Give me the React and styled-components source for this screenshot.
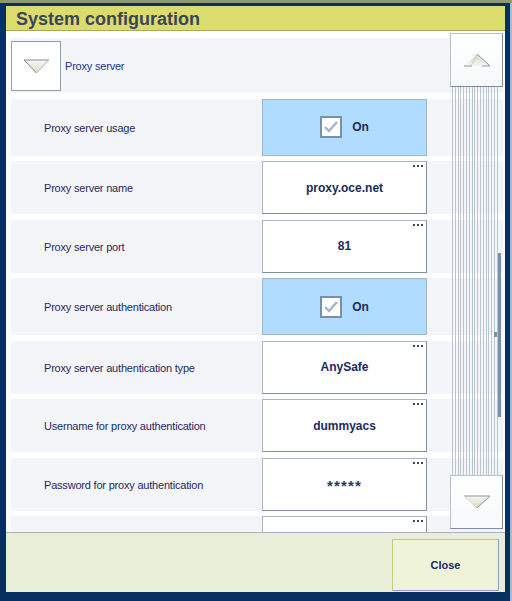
import React from 'react';
import styled, { createGlobalStyle } from 'styled-components';

const GlobalStyle = createGlobalStyle`
  html, body {
    margin: 0;
    padding: 0;
  }
  body {
    background: linear-gradient(#8e9b72 0 3px, #a9b8cc 3px);
    font-family: "Liberation Sans", Arial, sans-serif;
  }
`;

const Window = styled.div`
  margin-top: 3px;
  width: 499px;
  height: 586px;
  border: solid #082f62;
  border-width: 3px 5px 9px 6px;
  display: flex;
  flex-direction: column;
  background: #fff;
`;

const TitleBar = styled.div`
  height: 21px;
  padding: 3px 0 0 10px;
  flex: none;
  background: #dcdc6e;
  border-bottom: 1px solid #a9a95c;
  display: flex;
  align-items: center;
  font-size: 18px;
  font-weight: bold;
  color: #3a4658;
`;

const Content = styled.div`
  position: relative;
  height: 501px;
  flex: none;
  overflow: hidden;
  background: #fff;
`;

const List = styled.div`
  padding: 7px 2px 0 5px;
  display: flex;
  flex-direction: column;
`;

const SectionRow = styled.div`
  height: 55px;
  background: #f3f5f8;
  display: flex;
  align-items: center;
  font-size: 11px;
  letter-spacing: -0.2px;
  color: #22328a;
`;

const Toggle = styled.div`
  width: 48px;
  height: 48px;
  align-self: flex-start;
  margin: 3px 4px 0 0;
  background: #fff;
  border: 1px solid #8e9cac;
  display: flex;
  align-items: center;
  justify-content: center;
`;

const Row = styled.div`
  height: ${(p) => (p.$tall ? 57 : 53)}px;
  margin-top: 5.5px;
  background: #f3f5f8;
  display: flex;
  align-items: flex-start;
  flex: none;
`;

const Label = styled.div`
  width: 218px;
  padding: 1px 0 0 33px;
  align-self: center;
  font-size: 11px;
  letter-spacing: -0.2px;
  color: #1e2a62;
`;

const Control = styled.div`
  position: relative;
  width: 163px;
  height: ${(p) => (p.$on ? 55 : 51)}px;
  border: 1px solid ${(p) => (p.$on ? '#a3b6cb' : '#7d91a6')};
  border-top-color: ${(p) => (p.$on ? '#a3b6cb' : '#a6b6c8')};
  border-left-color: ${(p) => (p.$on ? '#a3b6cb' : '#a6b6c8')};
  background: ${(p) => (p.$on ? '#b0dcff' : '#fff')};
  display: flex;
  align-items: center;
  justify-content: center;
  gap: 10px;
  font-size: 12px;
  font-weight: bold;
  color: #1a2a5e;
`;

const Masked = styled.span`
  font-size: 15px;
  letter-spacing: 1.2px;
  padding-top: 3px;
  color: #2a3a6e;
`;

const Dots = styled.div`
  position: absolute;
  top: 3px;
  right: 3px;
  display: flex;
  gap: 2px;
  span {
    width: 2px;
    height: 2px;
    background: #3c465a;
  }
`;

const Check = styled.div`
  width: 18px;
  height: 18px;
  background: #fff;
  border: 2px solid #7890a8;
  display: flex;
  align-items: center;
  justify-content: center;
`;

const ScrollBar = styled.div`
  position: absolute;
  top: 2px;
  right: 2px;
  bottom: 3px;
  width: 53px;
  display: flex;
  flex-direction: column;
`;

const ScrollButton = styled.div`
  height: 52px;
  flex: none;
  background: linear-gradient(#ffffff, #f7f9fa);
  border: 1px solid #b9c3cc;
  border-right-color: #7a8ea2;
  border-bottom-color: #7a8ea2;
  display: flex;
  align-items: center;
  justify-content: center;
`;

const Track = styled.div`
  position: relative;
  flex: 1;
  margin: 0 3px 0 2px;
  background: repeating-linear-gradient(
    to right,
    #b9c6d0 0 1px,
    transparent 1px 2.8px
  );
`;

const Thumb = styled.div`
  position: absolute;
  left: 46px;
  top: 166px;
  width: 3px;
  height: 164px;
  background: #7891ad;
`;

const Marker = styled.div`
  position: absolute;
  left: 42px;
  top: 245px;
  width: 3px;
  height: 5px;
  background: #7891ad;
`;

const Footer = styled.div`
  height: 59px;
  flex: none;
  background: #e9eed8;
  border-top: 1px solid #a6b2bf;
  display: flex;
  justify-content: flex-end;
  align-items: flex-start;
  padding-right: 6px;
`;

const CloseButton = styled.div`
  margin-top: 6px;
  width: 105px;
  height: 50px;
  background: #eef3d9;
  border: 1px solid #c9cc70;
  border-right-color: #8ea3c2;
  border-bottom-color: #8ea3c2;
  display: flex;
  align-items: center;
  justify-content: center;
  font-size: 11px;
  font-weight: bold;
  color: #1a2a5e;
`;

const rows = [
  { label: 'Proxy server usage', on: true },
  { label: 'Proxy server name', value: 'proxy.oce.net' },
  { label: 'Proxy server port', value: '81' },
  { label: 'Proxy server authentication', on: true },
  { label: 'Proxy server authentication type', value: 'AnySafe' },
  { label: 'Username for proxy authentication', value: 'dummyacs' },
  { label: 'Password for proxy authentication', value: '*****', masked: true },
  { label: '', value: '' },
];

function DownTriangle() {
  return (
    <svg width="27" height="15" viewBox="0 0 27 15">
      <defs>
        <linearGradient id="tg" x1="0" y1="0" x2="0" y2="1">
          <stop offset="0" stopColor="#f7f7ef" />
          <stop offset="1" stopColor="#dcdcc8" />
        </linearGradient>
      </defs>
      <polygon points="1,1 26,1 13.5,14" fill="url(#tg)" />
      <polyline points="26,1 1,1 13.5,14" fill="none" stroke="#7d8c9c" strokeWidth="1" />
      <line x1="26" y1="1" x2="13.5" y2="14" stroke="#a9b5c0" strokeWidth="1" />
    </svg>
  );
}

function UpArrow() {
  return (
    <svg width="28" height="14" viewBox="0 0 28 14">
      <defs>
        <linearGradient id="ua" x1="0" y1="0" x2="0" y2="1">
          <stop offset="0" stopColor="#d6d6c0" />
          <stop offset="1" stopColor="#f8f8f2" />
        </linearGradient>
      </defs>
      <polygon points="1,13 14,1 27,13" fill="url(#ua)" />
      <polyline points="1,13 9,13" fill="none" stroke="#8596a8" strokeWidth="1" />
      <polyline points="14,1 27,13 19,13" fill="none" stroke="#8596a8" strokeWidth="1" />
      <line x1="8" y1="13" x2="14" y2="1" stroke="#c4ccd4" strokeWidth="1" />
    </svg>
  );
}

function DownArrow() {
  return (
    <svg width="28" height="14" viewBox="0 0 28 14">
      <defs>
        <linearGradient id="da" x1="0" y1="0" x2="0" y2="1">
          <stop offset="0" stopColor="#f8f8f2" />
          <stop offset="1" stopColor="#d6d6c0" />
        </linearGradient>
      </defs>
      <polygon points="1,1 27,1 14,13" fill="url(#da)" />
      <polyline points="1,1 27,1 14,13" fill="none" stroke="#8596a8" strokeWidth="1" />
      <line x1="1" y1="1" x2="14" y2="13" stroke="#d0d6dc" strokeWidth="1" />
    </svg>
  );
}

function CheckBox() {
  return (
    <Check>
      <svg width="16" height="14" viewBox="0 0 16 14">
        <polyline points="2,7 6,11 14,2" fill="none" stroke="#a6b4c8" strokeWidth="2.4" />
      </svg>
    </Check>
  );
}

export default function App() {
  return (
    <>
      <GlobalStyle />
      <Window>
        <TitleBar>System configuration</TitleBar>
        <Content>
          <List>
            <SectionRow>
              <Toggle>
                <DownTriangle />
              </Toggle>
              Proxy server
            </SectionRow>
            {rows.map((r, i) => (
              <Row key={`row-${i}`} $tall={r.on}>
                <Label>{r.label}</Label>
                {r.on ? (
                  <Control $on>
                    <CheckBox />
                    On
                  </Control>
                ) : (
                  <Control>
                    <Dots>
                      <span />
                      <span />
                      <span />
                    </Dots>
                    {r.masked ? <Masked>{r.value}</Masked> : r.value}
                  </Control>
                )}
              </Row>
            ))}
          </List>
          <ScrollBar>
            <ScrollButton>
              <UpArrow />
            </ScrollButton>
            <Track>
              <Thumb />
              <Marker />
            </Track>
            <ScrollButton>
              <DownArrow />
            </ScrollButton>
          </ScrollBar>
        </Content>
        <Footer>
          <CloseButton>Close</CloseButton>
        </Footer>
      </Window>
    </>
  );
}
